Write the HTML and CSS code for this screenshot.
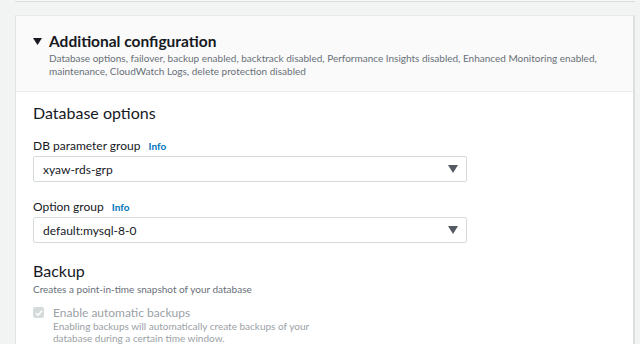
FILE: index.html
```html
<!DOCTYPE html>
<html lang="en">
<head>
  <meta charset="UTF-8">
  <title>Additional configuration</title>
  <link rel="stylesheet" href="styles.css">
</head>
<body>
  <div class="prev-card"></div>

  <div class="card">
    <div class="card-header">
      <h2>
        <svg class="caret" width="9" height="7" viewBox="0 0 9 7"><path d="M0 0h9L4.5 7z" fill="#16191f"/></svg>
        <span>Additional configuration</span>
      </h2>
      <p class="summary">Database options, failover, backup enabled, backtrack disabled, Performance Insights disabled, Enhanced Monitoring enabled,<br>maintenance, CloudWatch Logs, delete protection disabled</p>
    </div>

    <div class="card-body">
      <h3>Database options</h3>

      <div class="field">
        <label class="field-label">DB parameter group <a class="info">Info</a></label>
        <div class="select">
          <span>xyaw-rds-grp</span>
          <svg class="arrow" width="10" height="8" viewBox="0 0 10 8"><path d="M0 0h10L5 8z" fill="#545b64"/></svg>
        </div>
      </div>

      <div class="field">
        <label class="field-label">Option group <a class="info">Info</a></label>
        <div class="select">
          <span>default:mysql-8-0</span>
          <svg class="arrow" width="10" height="8" viewBox="0 0 10 8"><path d="M0 0h10L5 8z" fill="#545b64"/></svg>
        </div>
      </div>

      <h3 class="backup-title">Backup</h3>
      <p class="hint">Creates a point-in-time snapshot of your database</p>

      <div class="check disabled">
        <span class="box">
          <svg width="10" height="10" viewBox="0 0 10 10"><path d="M2 5.2l2 2 4-4.4" stroke="#fff" stroke-width="1.6" fill="none"/></svg>
        </span>
        <div>
          <div class="check-label">Enable automatic backups</div>
          <p class="hint">Enabling backups will automatically create backups of your<br>database during a certain time window.</p>
        </div>
      </div>
    </div>
  </div>
</body>
</html>
```

FILE: styles.css
```css
body {
  margin: 0;
  background-color: #f2f3f3;
  font-family: Lato, "Open Sans", Arial, sans-serif;
  color: #16191f;
  overflow: hidden;
}

.prev-card {
  margin: 0 5px 0 15px;
  height: 1px;
  border-bottom: 1px solid #dcdcdc;
  background-color: #f7f7f7;
}

.card {
  margin: 13px 5px 0 15px;
  background-color: #fff;
  border-left: 1px solid #e2e2e2;
  border-top: 1px solid #eaeaea;
  border-right: 2px solid #dedede;
  height: 400px;
}

.card-header {
  background-color: #fafafa;
  border-bottom: 1px solid #eaeded;
  padding: 14px 18px 13px 16px;
  height: 48px;
}

.card-header h2 {
  margin: 0;
  font-size: 15.5px;
  font-weight: 700;
  line-height: 22px;
  display: flex;
  align-items: center;
}

.caret {
  margin-left: 1px;
  margin-right: 7px;
}

.summary {
  margin: 0 0 0 17px;
  font-size: 10px;
  line-height: 13px;
  color: #687078;
  white-space: nowrap;
}

.card-body {
  padding: 10px 17px;
}

h3 {
  margin: 0 0 14px;
  font-size: 16px;
  font-weight: 400;
  line-height: 22px;
}

.field {
  margin-bottom: 17px;
}

.field-label {
  display: block;
  font-size: 12px;
  line-height: 16px;
  margin-bottom: 2px;
}

.info {
  color: #0073bb;
  font-weight: 700;
  font-size: 10px;
  margin-left: 5px;
}

.select {
  width: 415px;
  height: 24px;
  border: 1px solid #d5dbdb;
  border-radius: 2px;
  display: flex;
  align-items: center;
  justify-content: space-between;
  padding: 0 8px 0 9px;
  font-size: 12px;
}

.backup-title {
  margin: 0 0 1px;
}

.hint {
  margin: 0;
  font-size: 10px;
  line-height: 13px;
  color: #687078;
}

.check {
  display: flex;
  gap: 9px;
  margin-top: 9px;
}

.box {
  width: 11px;
  height: 11px;
  background-color: #d5dbdb;
  border-radius: 2px;
  margin-top: 2px;
  display: flex;
  align-items: center;
  justify-content: center;
}

.check-label {
  font-size: 12px;
  line-height: 15px;
  color: #9ba1a6;
}

.check .hint {
  line-height: 12px;
  color: #9ba1a6;
}
```
